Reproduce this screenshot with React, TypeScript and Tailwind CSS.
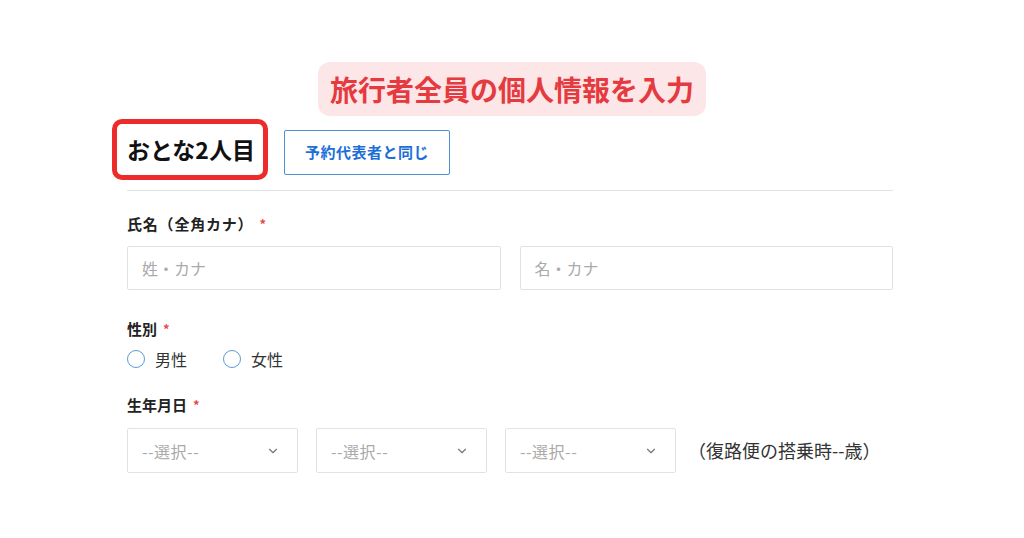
import { ChevronDown } from 'lucide-react'

/** select boxes for birth date */
const DATE_SELECTS = ['year', 'month', 'day']

function Required() {
  return <span className="ml-[6px] text-[13px] text-[#e5484d]">*</span>
}

function Radio({ label }: { label: string }) {
  return (
    <label className="flex items-center gap-[10px]">
      <span className="w-[18px] h-[18px] rounded-full border-[1.5px] border-[#5b9bd5] bg-white" />
      <span className="text-[16px] text-[#333]">{label}</span>
    </label>
  )
}

export default function App() {
  return (
    <div
      className="w-[1024px] h-[538px] bg-white overflow-hidden text-[#222]"
      style={{ fontFamily: '"Noto Sans CJK JP", "Noto Sans", sans-serif' }}
    >
      <div className="flex justify-center pt-[62px]">
        <div className="h-[54px] px-[12px] rounded-[12px] bg-[#fde6e7] flex items-center text-[28px] font-bold text-[#e53a3f]">
          旅行者全員の個人情報を入力
        </div>
      </div>

      <div className="ml-[127px] w-[766px]">
        <div className="flex items-start gap-[16px] ml-[-15px] mt-[3px]">
          <div className="h-[61px] w-[156px] border-[5px] border-[#ee2b2b] rounded-[10px] flex items-center pl-[10px]">
            <h2 className="text-[23px] font-bold text-[#111] leading-none">おとな2人目</h2>
          </div>
          <button className="mt-[11px] h-[45px] w-[166px] border border-[#4a8fd8] rounded-[2px] bg-white text-[15px] font-bold tracking-[0.5px] text-[#1d6fd8]">
            予約代表者と同じ
          </button>
        </div>

        <div className="mt-[10px] h-px bg-[#e3e3e3]" />

        <div className="mt-[23px] flex items-center h-[20px] text-[15px] font-bold tracking-[0.8px]">
          氏名（全角カナ）<Required />
        </div>
        <div className="mt-[12px] flex gap-[19px]">
          <div className="flex-1 h-[44px] border border-[#e2e2e2] rounded-[2px] flex items-center px-[14px] text-[16px] text-[#aaa]">
            姓・カナ
          </div>
          <div className="flex-1 h-[44px] border border-[#e2e2e2] rounded-[2px] flex items-center px-[14px] text-[16px] text-[#aaa]">
            名・カナ
          </div>
        </div>

        <div className="mt-[29px] flex items-center h-[20px] text-[15px] font-bold">
          性別<Required />
        </div>
        <div className="mt-[9px] h-[22px] flex items-center gap-[36px]">
          <Radio label="男性" />
          <Radio label="女性" />
        </div>

        <div className="mt-[25px] flex items-center h-[20px] text-[15px] font-bold">
          生年月日<Required />
        </div>
        <div className="mt-[13px] flex items-center gap-[18px]">
          {DATE_SELECTS.map((k) => (
            <div
              key={k}
              className="w-[171px] h-[45px] border border-[#e2e2e2] rounded-[2px] flex items-center justify-between pl-[14px] pr-[17px]"
            >
              <span className="text-[16px] text-[#aaa] tracking-[0.5px]">--選択--</span>
              <ChevronDown className="w-[14px] h-[14px] text-[#777]" strokeWidth={2} />
            </div>
          ))}
          <span className="ml-[-6px] text-[18px] text-[#333]">（復路便の搭乗時--歳）</span>
        </div>
      </div>
    </div>
  )
}
